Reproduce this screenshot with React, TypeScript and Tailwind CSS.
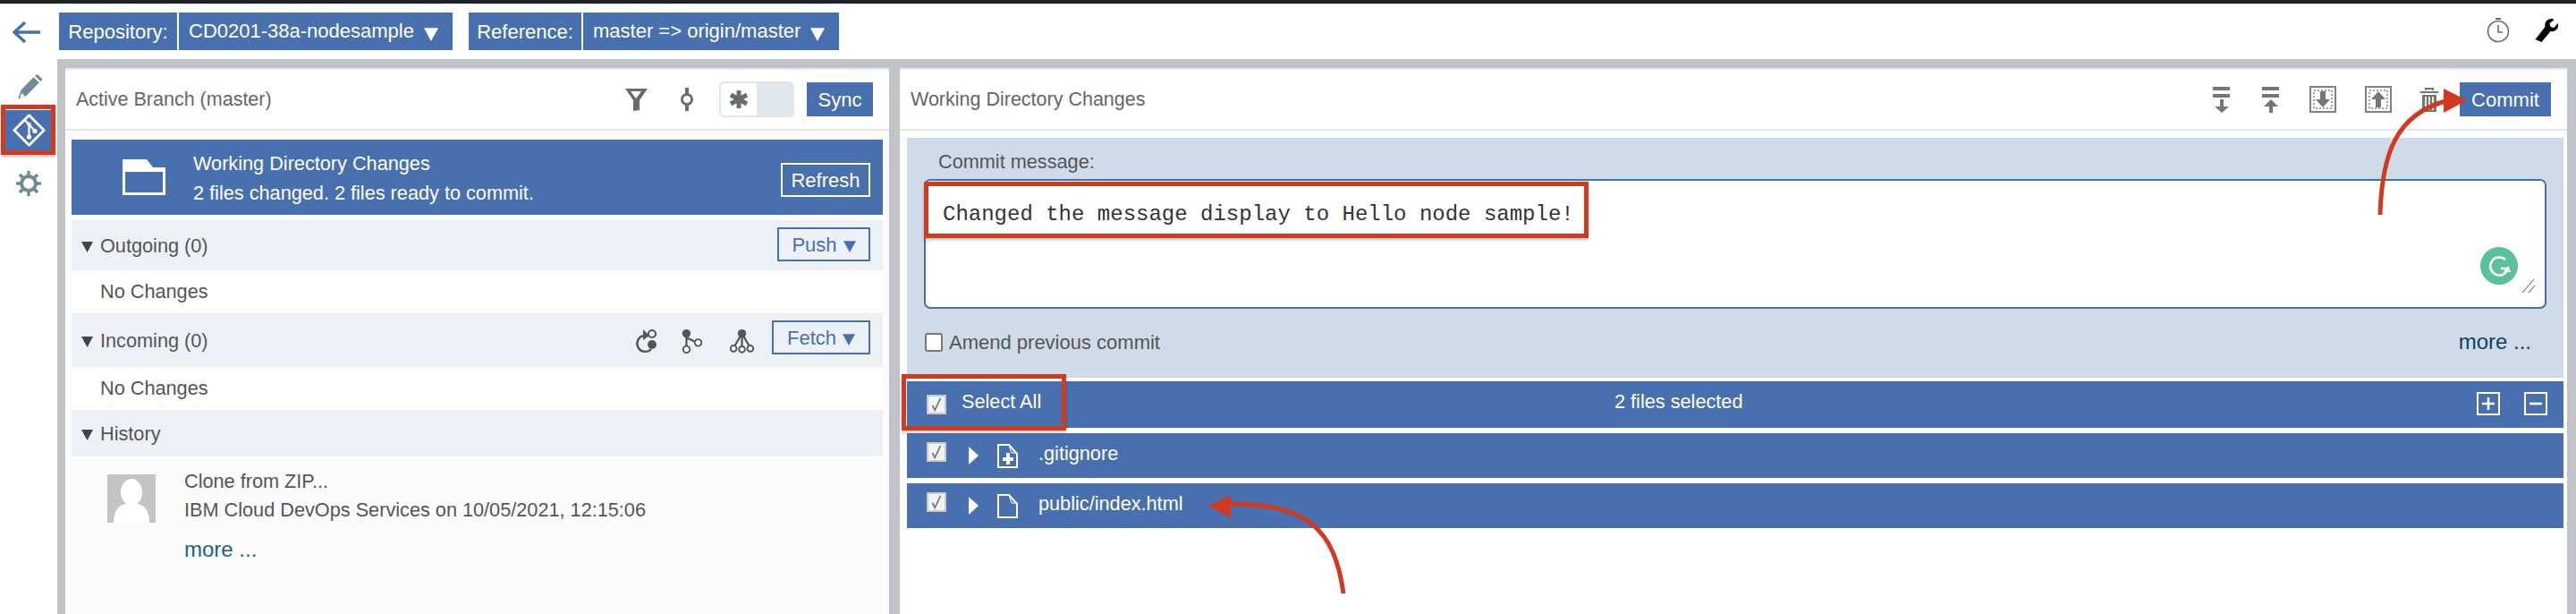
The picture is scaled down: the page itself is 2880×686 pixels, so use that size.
import React from "react";

const Tri = ({ className }: { className: string }) => (
  <svg viewBox="0 0 12 12" className={className}><path d="M0 1h12L6 12z" fill="currentColor" /></svg>
);

const Check = () => (
  <div className="w-[22px] h-[22px] bg-[#f2f2f2] border-2 border-[#c9c9c9] flex items-center justify-center shrink-0">
    <svg viewBox="0 0 20 20" className="w-[18px] h-[18px]"><path d="M5 11l3 6 7-15" fill="none" stroke="#7a7a7a" strokeWidth="2" /></svg>
  </div>
);

const RepoBtn = ({ label, value, lw, vw }: { label: string; value: string; lw: string; vw: string }) => (
  <div className="flex gap-[2px] h-[42px] text-white text-[22px]">
    <div className={`${lw} bg-[#4870ae] flex items-center justify-center`}>{label}</div>
    <div className={`${vw} bg-[#4870ae] flex items-center pl-[11px] gap-[11px]`}>
      <span className="relative top-[-1px]">{value}</span>
      <Tri className="w-[16px] h-[16px] mt-[5px]" />
    </div>
  </div>
);

const Pencil = () => (
  <svg viewBox="0 0 56 56" className="w-[30px] h-[30px]">
    <path d="M6 53l6-18L38 8l12 11-26 27z" fill="#6f8a94" />
    <path d="M10 51l3-10 7 6z" fill="#fff" />
    <path d="M41 5l5-3 11 10-4 5z" fill="#6f8a94" />
  </svg>
);

const GitIcon = () => (
  <svg viewBox="0 0 40 40" className="w-[37px] h-[37px]">
    <path d="M20 2L38 20 20 38 2 20z" fill="none" stroke="#fff" strokeWidth="3" strokeLinejoin="round" />
    <path d="M15 8l5 5v16M20 13l7 8" fill="none" stroke="#fff" strokeWidth="2.4" />
    <circle cx="20" cy="28" r="2.8" fill="#fff" /><circle cx="27" cy="21" r="2.8" fill="#fff" /><circle cx="20" cy="13" r="2.4" fill="#fff" />
  </svg>
);

const Gear = () => (
  <svg viewBox="0 0 30 30" className="w-[30px] h-[30px]">
    <g stroke="#6f8a94" strokeWidth="3.4">
      <path d="M15 1v28M1 15h28M5 5l20 20M25 5L5 25" />
    </g>
    <circle cx="15" cy="15" r="8" fill="#fff" stroke="#6f8a94" strokeWidth="4" />
  </svg>
);

const Funnel = () => (
  <svg viewBox="0 0 26 26" className="w-[26px] h-[26px]">
    <path d="M1 1h25L17 14v11l-7 1V14zM7 4l6 8 6-8z" fill="#6b6b6b" fillRule="evenodd" />
  </svg>
);

const CommitDot = () => (
  <svg viewBox="0 0 16 26" className="w-[16px] h-[26px]">
    <path d="M8 0v7M8 19v7" stroke="#6b6b6b" strokeWidth="4" />
    <circle cx="8" cy="13" r="5.5" fill="#fff" stroke="#6b6b6b" strokeWidth="3" />
  </svg>
);

const Star = () => (
  <svg viewBox="0 0 22 22" className="w-[22px] h-[22px]">
    <path d="M11 1v20M2 6l18 10M20 6L2 16" stroke="#6b6b6b" strokeWidth="5" />
  </svg>
);

const Folder = () => (
  <svg viewBox="0 0 48 40" className="w-[48px] h-[40px]">
    <path d="M0 0h27l7 9h14v31H0z" fill="#fff" />
    <rect x="3" y="14" width="42" height="23" fill="#4870ae" />
  </svg>
);

const StackArrow = ({ up }: { up?: boolean }) => (
  <svg viewBox="0 0 20 30" className="w-[20px] h-[30px]">
    <rect x="0" y="1" width="19" height="4" fill="#767676" />
    <rect x="0" y="9" width="19" height="4" fill="#767676" />
    {up ? <path d="M10 15l8 8h-6v7H8v-7H2z" fill="#767676" /> : <path d="M8 15h4v8h6l-8 7-8-7h6z" fill="#767676" />}
  </svg>
);

const PageArrow = ({ up }: { up?: boolean }) => (
  <svg viewBox="0 0 30 30" className="w-[30px] h-[30px]">
    <rect x="1" y="1" width="28" height="28" fill="#fff" stroke="#808080" strokeWidth="2" />
    <rect x="5" y="5" width="20" height="20" fill="none" stroke="#808080" strokeWidth="1.5" strokeDasharray="2 2" />
    {up ? <path d="M15 6l8 9h-5v9h-6v-9H7z" fill="#767676" /> : <path d="M12 6h6v9h5l-8 9-8-9h5z" fill="#767676" />}
  </svg>
);

const Trash = () => (
  <svg viewBox="0 0 20 27" className="w-[20px] h-[27px]">
    <path d="M6 3V1h8v2M0 5h20" fill="none" stroke="#767676" strokeWidth="2" />
    <path d="M2 8h16v19H2z" fill="#767676" />
    <path d="M6 10v15M10 10v15M14 10v15" stroke="#fff" strokeWidth="1.6" />
  </svg>
);

const Rebase = () => (
  <svg viewBox="0 0 28 28" className="w-[28px] h-[28px]">
    <path d="M13 8a9 9 0 1 0 8 15" fill="none" stroke="#555" strokeWidth="2.4" />
    <path d="M12 1l7 7-7 5z" fill="#555" />
    <circle cx="22" cy="6" r="4" fill="none" stroke="#555" strokeWidth="2" />
    <circle cx="22" cy="18" r="5" fill="#555" />
  </svg>
);

const Merge = () => (
  <svg viewBox="0 0 26 30" className="w-[26px] h-[28px]">
    <path d="M6 6v18M6 11l13 6" stroke="#555" strokeWidth="2.4" fill="none" />
    <circle cx="6" cy="6" r="5" fill="#555" />
    <circle cx="6" cy="25" r="4" fill="#fff" stroke="#555" strokeWidth="2" />
    <circle cx="20" cy="17" r="4" fill="#fff" stroke="#555" strokeWidth="2" />
  </svg>
);

const Octopus = () => (
  <svg viewBox="0 0 30 30" className="w-[29px] h-[28px]">
    <path d="M15 6L5 23M15 6v18M15 6l10 17" stroke="#555" strokeWidth="2.4" fill="none" />
    <circle cx="15" cy="6" r="5" fill="#555" />
    <circle cx="5" cy="24" r="3.6" fill="#fff" stroke="#555" strokeWidth="2" />
    <circle cx="15" cy="25" r="3.6" fill="#fff" stroke="#555" strokeWidth="2" />
    <circle cx="25" cy="24" r="3.6" fill="#fff" stroke="#555" strokeWidth="2" />
  </svg>
);

const FileIcon = ({ plus }: { plus?: boolean }) => (
  <svg viewBox="0 0 23 27" className="w-[23px] h-[27px] shrink-0">
    <path d="M1 1h12l9 10v15H1z" fill="none" stroke="#fff" strokeWidth="2" />
    <path d="M13 1l3 9h6" fill="none" stroke="#fff" strokeWidth="1" />
    {plus && <path d="M12 10v13M6 17h12" stroke="#fff" strokeWidth="4" />}
  </svg>
);

const SectionHead = ({ title, h, children }: { title: string; h: string; children?: React.ReactNode }) => (
  <div className={`${h} bg-[#edf1f5] flex items-center pl-[11px] pr-[14px] text-[21.7px] text-[#555]`}>
    <Tri className="w-[13px] h-[13px] text-[#444] mr-[8px] mt-[2px]" />
    <span className="mt-[2px]">{title}</span>
    {children}
  </div>
);

const OutlineBtn = ({ label, w }: { label: string; w: string }) => (
  <div className={`${w} h-[38px] border-2 border-[#4870ae] text-[#4870ae] text-[22px] flex items-center justify-center gap-[7px]`}>
    {label}
    <Tri className="w-[14px] h-[14px] mt-[3px]" />
  </div>
);

const FileRow = ({ name, plus }: { name: string; plus?: boolean }) => (
  <div className="h-[50px] bg-[#4870ae] flex items-center pl-[22px] text-white text-[21.7px]">
    <div className="-mt-[8px]"><Check /></div>
    <svg viewBox="0 0 11 20" className="w-[11px] h-[20px] ml-[25px] mr-[21px] shrink-0"><path d="M0 0l11 10L0 20z" fill="#fff" /></svg>
    <FileIcon plus={plus} />
    <span className="ml-[23px] -mt-[4px]">{name}</span>
  </div>
);

const PlusMinus = ({ minus }: { minus?: boolean }) => (
  <svg viewBox="0 0 26 26" className="w-[26px] h-[26px]">
    <rect x="1" y="1" width="24" height="24" fill="none" stroke="#fff" strokeWidth="2" />
    <path d={minus ? "M6 13h14" : "M13 6v14M6 13h14"} stroke="#fff" strokeWidth="2.6" />
  </svg>
);

const NoChanges = () => (
  <div className="mt-[4px] h-[38px] bg-white pl-[32px] pt-[3px] flex items-center text-[21.7px] text-[#555]">No Changes</div>
);

export default function App() {
  return (
    <div className="relative w-[2880px] h-[686px] overflow-hidden bg-white flex flex-col font-['Liberation_Sans',Arial,sans-serif]">
      <div className="h-[4px] bg-[#1c2227] shrink-0" />
      <div className="h-[62px] shrink-0 flex items-start pt-[10px] pr-[18px]">
        <div className="w-[66px] h-[42px] shrink-0 flex items-center justify-start pl-[14px] pt-[2px]">
          <svg viewBox="0 0 32 26" className="w-[32px] h-[26px]">
            <path d="M31 13H3M14 2L2 13l12 11" fill="none" stroke="#4870ae" strokeWidth="3.4" />
          </svg>
        </div>
        <div className="flex gap-[18px]">
          <RepoBtn label="Repository:" value="CD0201-38a-nodesample" lw="w-[132px]" vw="w-[306px]" />
          <RepoBtn label="Reference:" value="master => origin/master" lw="w-[126px]" vw="w-[286px]" />
        </div>
        <div className="ml-auto flex items-center gap-[27px] mt-[6px]">
          <svg viewBox="0 0 26 28" className="w-[26px] h-[28px]">
            <circle cx="13" cy="15" r="11.5" fill="none" stroke="#6b6b6b" strokeWidth="1.6" />
            <path d="M13 8v8h5" fill="none" stroke="#6b6b6b" strokeWidth="1.6" />
            <path d="M10 1h6" stroke="#6b6b6b" strokeWidth="2" />
          </svg>
          <svg viewBox="0 0 28 28" className="w-[29px] h-[28px]">
            <path d="M1 24L12 10C11 5 14 1 19 1c1 0 2 0 3 1l-5 4 1 4 4 1 4-5c2 5-2 10-8 9L8 27z" fill="#000" />
          </svg>
        </div>
      </div>
      <div className="flex-1 flex min-h-0">
        <div className="w-[64px] shrink-0 flex flex-col items-center">
          <div className="h-[46px] flex items-end justify-center"><Pencil /></div>
          <div className="w-[52px] h-[45px] mt-[11px] bg-[#4870ae] flex items-center justify-center"><GitIcon /></div>
          <div className="mt-[22px]"><Gear /></div>
        </div>
        <div className="flex-1 bg-[#c1c3c7] pt-[10px] pl-[9px] pr-[10px] flex gap-[12px] min-w-0">
          <div className="w-[921px] shrink-0 bg-[#fbfbfb] border-t-2 border-[#e6e9ec] flex flex-col">
            <div className="h-[68px] bg-white border-b-2 border-[#e2e7ec] flex items-center pl-[12px] text-[21.5px] text-[#666] shrink-0">
              <span>Active Branch (master)</span>
              <div className="ml-auto flex items-center pr-[18px]">
                <Funnel />
                <div className="ml-[36px]"><CommitDot /></div>
                <div className="ml-[28px] w-[84px] h-[40px] rounded-[6px] bg-[#e1e6ea] border-2 border-[#e1e6ea] overflow-hidden">
                  <div className="w-[40px] h-full bg-white flex items-center justify-center"><Star /></div>
                </div>
                <div className="ml-[14px] w-[74px] h-[38px] bg-[#4870ae] text-white text-[22px] flex items-center justify-center">Sync</div>
              </div>
            </div>
            <div className="mx-[7px] mt-[10px] flex flex-col">
              <div className="h-[84px] bg-[#4870ae] flex items-center pl-[57px] pr-[14px] text-white text-[21.7px]">
                <Folder />
                <div className="ml-[31px] flex flex-col gap-[10px] pt-[1px]">
                  <span className="leading-[23px]">Working Directory Changes</span>
                  <span className="leading-[23px]">2 files changed. 2 files ready to commit.</span>
                </div>
                <div className="ml-auto mt-[6px] w-[100px] h-[38px] border-2 border-white text-[22px] flex items-center justify-center">Refresh</div>
              </div>
              <div className="mt-[6px]">
                <SectionHead title="Outgoing (0)" h="h-[56px]">
                  <div className="ml-auto -mt-[2px]"><OutlineBtn label="Push" w="w-[104px]" /></div>
                </SectionHead>
              </div>
              <NoChanges />
              <div className="mt-[6px]">
                <SectionHead title="Incoming (0)" h="h-[60px]">
                  <div className="ml-auto flex items-center mt-[2px]">
                    <Rebase />
                    <div className="ml-[26px]"><Merge /></div>
                    <div className="ml-[28px]"><Octopus /></div>
                    <div className="ml-[19px] -mt-[8px]"><OutlineBtn label="Fetch" w="w-[110px]" /></div>
                  </div>
                </SectionHead>
              </div>
              <NoChanges />
              <div className="mt-[6px]"><SectionHead title="History" h="h-[52px]" /></div>
              <div className="flex pl-[40px] pt-[20px]">
                <div className="w-[54px] h-[54px] bg-[#c4c4c4] overflow-hidden flex flex-col items-center shrink-0">
                  <svg viewBox="0 0 54 54" className="w-[54px] h-[54px]">
                    <ellipse cx="27" cy="20" rx="12" ry="15" fill="#fff" />
                    <path d="M7 54c0-16 8-22 20-22s20 6 20 22z" fill="#fff" />
                  </svg>
                </div>
                <div className="ml-[32px] flex flex-col text-[21.7px] text-[#555] -mt-[4px]">
                  <span className="leading-[24px]">Clone from ZIP...</span>
                  <span className="leading-[24px] mt-[8px]">IBM Cloud DevOps Services on 10/05/2021, 12:15:06</span>
                  <span className="leading-[24px] mt-[20px] text-[24px] text-[#1f5f8b]">more ...</span>
                </div>
              </div>
            </div>
          </div>
          <div className="flex-1 min-w-0 bg-white border-t-2 border-[#e6e9ec] flex flex-col">
            <div className="h-[68px] bg-white border-b-2 border-[#e2e7ec] flex items-center pl-[12px] pr-[18px] text-[21.5px] text-[#666] shrink-0">
              <span>Working Directory Changes</span>
              <div className="ml-auto flex items-center">
                <div className="ml-[2px]"><StackArrow /></div>
                <div className="ml-[35px]"><StackArrow up /></div>
                <div className="ml-[33px]"><PageArrow /></div>
                <div className="ml-[32px]"><PageArrow up /></div>
                <div className="ml-[32px]"><Trash /></div>
                <div className="ml-[24px] w-[102px] h-[38px] bg-[#4870ae] text-white text-[22px] flex items-center justify-center">Commit</div>
              </div>
            </div>
            <div className="mx-[8px] mr-[4px] mt-[8px] flex flex-col">
              <div className="h-[268px] bg-[#cfdbe8] pl-[19px] pr-[19px] flex flex-col">
                <div className="pl-[16px] pt-[15px] h-[46px] text-[21.7px] leading-[24px] text-[#555]">Commit message:</div>
                <div className="relative h-[145px] bg-white border-2 border-[#4870ae] rounded-[7px] pl-[19px] pt-[24px] font-['Liberation_Mono',monospace] text-[24px] leading-[28px] text-[#333]">
                  Changed the message display to Hello node sample!
                  <div className="absolute right-[30px] bottom-[25px] w-[42px] h-[42px] rounded-full bg-[#5bc09c] flex items-center justify-center">
                    <svg viewBox="0 0 28 28" className="w-[28px] h-[28px]">
                      <path d="M21 7a10 10 0 1 0 3 10h-8" fill="none" stroke="#fff" strokeWidth="2.6" />
                      <path d="M20 21l4-5 2 5" fill="none" stroke="#fff" strokeWidth="2" />
                    </svg>
                  </div>
                  <svg viewBox="0 0 16 16" className="absolute right-[10px] bottom-[16px] w-[16px] h-[16px]">
                    <path d="M1 16L14 1M8 16l7-8" stroke="#555" strokeWidth="1" />
                  </svg>
                </div>
                <div className="mt-[19px] flex items-center">
                  <div className="w-[20px] h-[21px] bg-white border-2 border-[#777] rounded-[3px] ml-[1px]" />
                  <span className="ml-[7px] text-[22px] text-[#555]">Amend previous commit</span>
                  <span className="ml-auto mr-[17px] text-[24px] text-[#123f5c]">more ...</span>
                </div>
              </div>
              <div className="mt-[4px] h-[52px] bg-[#4870ae] flex items-center pl-[22px] pr-[18px] text-white text-[21.7px]">
                <Check />
                <span className="ml-[17px] -mt-[6px] w-[730px]">Select All</span>
                <span className="-mt-[6px]">2 files selected</span>
                <div className="ml-auto flex gap-[27px] -mt-[3px]"><PlusMinus /><PlusMinus minus /></div>
              </div>
              <div className="mt-[6px]"><FileRow name=".gitignore" plus /></div>
              <div className="mt-[6px]"><FileRow name="public/index.html" /></div>
            </div>
          </div>
        </div>
      </div>

      <div className="absolute left-[1px] top-[117px] w-[61px] h-[56px] border-[5px] border-[#d03a20] shadow-[0_2px_3px_rgba(0,0,0,0.25)]" />
      <div className="absolute left-[1033px] top-[203px] w-[743px] h-[63px] border-[5px] border-[#d03a20] shadow-[0_2px_3px_rgba(0,0,0,0.25)]" />
      <div className="absolute left-[1008px] top-[418px] w-[184px] h-[63px] border-[5px] border-[#d03a20] shadow-[0_2px_3px_rgba(0,0,0,0.25)]" />
      <svg viewBox="0 0 2880 686" className="absolute left-0 top-0 w-[2880px] h-[686px] pointer-events-none">
        <path d="M2661 240C2663 170 2680 128 2734 113" fill="none" stroke="#d03a20" strokeWidth="5" />
        <path d="M2732 99l26 13-26 14z" fill="#d03a20" />
        <path d="M1502 663C1492 590 1460 562 1374 563" fill="none" stroke="#d03a20" strokeWidth="5" />
        <path d="M1376 553l-25 12 25 14z" fill="#d03a20" />
      </svg>
    </div>
  );
}
